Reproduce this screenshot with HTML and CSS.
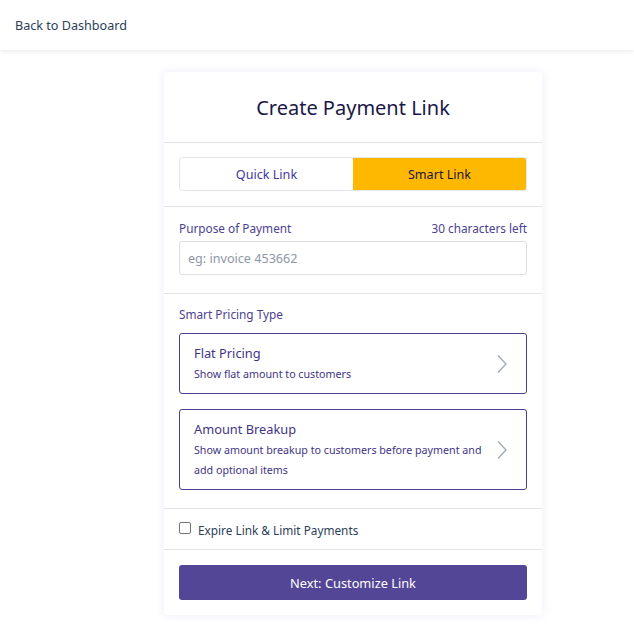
FILE: index.html
```
<!DOCTYPE html>
<html>
<head>
<meta charset="utf-8">
<link rel="stylesheet" href="styles.css">
</head>
<body>
<header class="topbar"><a class="back">Back to Dashboard</a></header>
<main class="page">
  <section class="card">
    <div class="sec sec-title"><h1>Create Payment Link</h1></div>
    <div class="sec sec-toggle">
      <div class="toggle">
        <div class="tab">Quick Link</div>
        <div class="tab active">Smart Link</div>
      </div>
    </div>
    <div class="sec sec-purpose">
      <div class="label-row"><span>Purpose of Payment</span><span>30 characters left</span></div>
      <div class="input">eg: invoice 453662</div>
    </div>
    <div class="sec sec-pricing">
      <div class="label">Smart Pricing Type</div>
      <div class="option opt1">
        <div class="opt-text">
          <div class="opt-title">Flat Pricing</div>
          <div class="opt-sub">Show flat amount to customers</div>
        </div>
        <svg class="chev" width="12" height="20" viewBox="0 0 12 20"><path d="M2 1.5 L10 10 L2 18.5" fill="none" stroke="#a3abba" stroke-width="1.4"/></svg>
      </div>
      <div class="option opt2">
        <div class="opt-text">
          <div class="opt-title">Amount Breakup</div>
          <div class="opt-sub">Show amount breakup to customers before payment and add optional items</div>
        </div>
        <svg class="chev" width="12" height="20" viewBox="0 0 12 20"><path d="M2 1.5 L10 10 L2 18.5" fill="none" stroke="#a3abba" stroke-width="1.4"/></svg>
      </div>
    </div>
    <div class="sec sec-check">
      <label class="check"><span class="box"></span><span>Expire Link &amp; Limit Payments</span></label>
    </div>
    <div class="sec sec-btn">
      <div class="btn">Next: Customize Link</div>
    </div>
  </section>
</main>
</body>
</html>
```
FILE: styles.css
```
* { box-sizing: border-box; }
body { margin: 0; background: #fff; font-family: "Noto Sans", "Open Sans", sans-serif; }
.topbar { height: 50px; background: #fff; box-shadow: 0 2px 4px rgba(0,0,0,0.07); display: flex; align-items: center; padding-left: 15px; position: relative; z-index: 1; }
.back { font-size: 12.6px; color: #2c3e58; }
.page { padding: 22px 0 20px 164px; }
.card { width: 378px; background: #fff; border-radius: 3px; box-shadow: 0 0 10px rgba(90,110,200,0.12); }
.sec { padding: 0 15px; border-bottom: 1px solid #e3e3e8; }
.sec:last-child { border-bottom: none; }
.sec-title { padding-top: 22px; padding-bottom: 20px; text-align: center; }
h1 { margin: 0; font-size: 20px; line-height: 28px; font-weight: 400; color: #1b1748; }
.sec-toggle { padding-top: 14px; padding-bottom: 15px; }
.toggle { display: flex; height: 34px; border: 1px solid #e6e6ee; border-radius: 3px; overflow: hidden; }
.tab { flex: 1; display: flex; align-items: center; justify-content: center; font-size: 12.6px; color: #3f37a0; }
.tab.active { background: #ffb800; color: #1a1440; }
.sec-purpose { padding-top: 13px; padding-bottom: 18px; }
.label-row { display: flex; justify-content: space-between; font-size: 11.8px; line-height: 17px; color: #4b3f91; margin-bottom: 4px; }
.input { height: 34px; border: 1px solid #dcdde3; border-radius: 3px; padding-left: 8px; display: flex; align-items: center; font-size: 12.6px; color: #8d97a8; }
.sec-pricing { padding-top: 12px; padding-bottom: 18px; }
.label { font-size: 11.8px; line-height: 17px; color: #4b3f91; margin-bottom: 10px; }
.option { border: 1px solid #4b3f91; border-radius: 3px; display: flex; align-items: center; padding: 10px 18px 9px 14px; }
.opt2 { margin-top: 15px; padding-bottom: 9px; }
.opt-text { flex: 1; }
.opt-title { font-size: 12.8px; line-height: 18px; color: #3f3585; margin-bottom: 2px; }
.opt-sub { font-size: 10.7px; line-height: 20px; color: #3f3585; padding-right: 8px; }
.chev { flex: none; }
.sec-check { padding-top: 13px; padding-bottom: 11px; }
.check { display: flex; align-items: center; font-size: 11.8px; line-height: 16px; color: #2c3e58; }
.box { width: 12px; height: 12px; border: 1px solid #767676; border-radius: 2px; margin-right: 7px; margin-top: -4px; background: #fff; }
.sec-btn { padding-top: 15px; padding-bottom: 15px; }
.btn { height: 35px; background: #534696; border-radius: 3px; color: #fff; font-size: 12.8px; display: flex; align-items: center; justify-content: center; }
```
